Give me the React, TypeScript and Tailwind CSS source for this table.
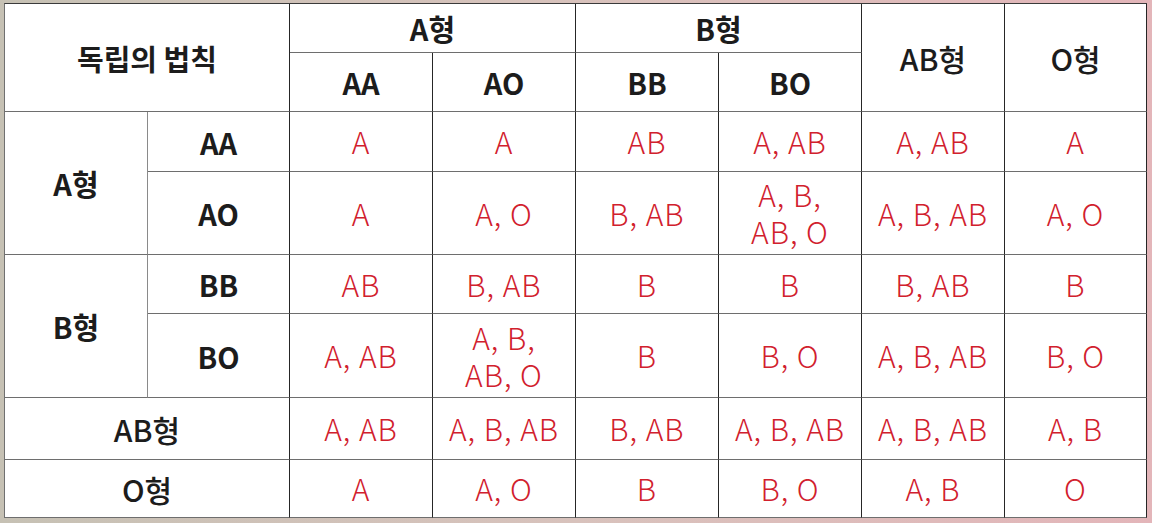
import React from 'react';

type Cell = {
  text: string;
  red?: boolean;
  bold?: boolean;
  col?: string;
  row?: string;
  lb?: boolean; // lighter right border
};

const head: Cell[] = [
  { text: '독립의 법칙', bold: true, col: 'col-span-2', row: 'row-span-2' },
  { text: 'A형', bold: true, col: 'col-span-2' },
  { text: 'B형', bold: true, col: 'col-span-2' },
  { text: 'AB형', row: 'row-span-2' },
  { text: 'O형', row: 'row-span-2' },
  { text: 'AA', bold: true },
  { text: 'AO', bold: true },
  { text: 'BB', bold: true },
  { text: 'BO', bold: true },
];

const body: Cell[] = [
  { text: 'A형', bold: true, row: 'row-span-2', lb: true },
  { text: 'AA', bold: true },
  { text: 'A', red: true },
  { text: 'A', red: true },
  { text: 'AB', red: true },
  { text: 'A, AB', red: true },
  { text: 'A, AB', red: true },
  { text: 'A', red: true },
  { text: 'AO', bold: true },
  { text: 'A', red: true },
  { text: 'A, O', red: true },
  { text: 'B, AB', red: true },
  { text: 'A, B,\nAB, O', red: true },
  { text: 'A, B, AB', red: true },
  { text: 'A, O', red: true },
  { text: 'B형', bold: true, row: 'row-span-2', lb: true },
  { text: 'BB', bold: true },
  { text: 'AB', red: true },
  { text: 'B, AB', red: true },
  { text: 'B', red: true },
  { text: 'B', red: true },
  { text: 'B, AB', red: true },
  { text: 'B', red: true },
  { text: 'BO', bold: true },
  { text: 'A, AB', red: true },
  { text: 'A, B,\nAB, O', red: true },
  { text: 'B', red: true },
  { text: 'B, O', red: true },
  { text: 'A, B, AB', red: true },
  { text: 'B, O', red: true },
  { text: 'AB형', col: 'col-span-2' },
  { text: 'A, AB', red: true },
  { text: 'A, B, AB', red: true },
  { text: 'B, AB', red: true },
  { text: 'A, B, AB', red: true },
  { text: 'A, B, AB', red: true },
  { text: 'A, B', red: true },
  { text: 'O형', col: 'col-span-2' },
  { text: 'A', red: true },
  { text: 'A, O', red: true },
  { text: 'B', red: true },
  { text: 'B, O', red: true },
  { text: 'A, B', red: true },
  { text: 'O', red: true },
];

const App = () => {
  const cells = [...head, ...body];
  return (
    <div className="w-[1152px] h-[523px] overflow-hidden bg-gradient-to-r from-[#c6c1b4] via-[#d8c2bc] to-[#e3b5b9] pt-[3px] pl-[4px]">
      <div
        className="grid w-[1143px] bg-white border-l border-t border-l-[#707070] border-t-[#3a3a3a] grid-cols-[143px_142px_143px_143px_143px_143px_143px_142px] grid-rows-[49px_59px_60px_83px_59px_84px_62px_58px]"
        style={{ fontFamily: '"Noto Sans CJK KR", "Noto Sans", sans-serif' }}
      >
        {cells.map((c, i) => (
          <div
            key={i}
            className={`flex items-center justify-center text-center whitespace-pre-line border-r border-b border-b-[#6e6e6e] ${
              c.lb ? 'border-r-[#8a8a8a]' : 'border-r-[#262626]'
            } ${c.col ?? ''} ${c.row ?? ''} ${
              c.red
                ? 'text-[#d1202d] text-[30px] leading-[37px] font-light tracking-[1px]'
                : c.bold
                ? 'text-[#1c1c1c] text-[29px] leading-[36px] font-semibold'
                : 'text-[#1c1c1c] text-[30px] leading-[36px] font-medium'
            }`}
          >
            {c.text}
          </div>
        ))}
      </div>
    </div>
  );
};

export default App;
